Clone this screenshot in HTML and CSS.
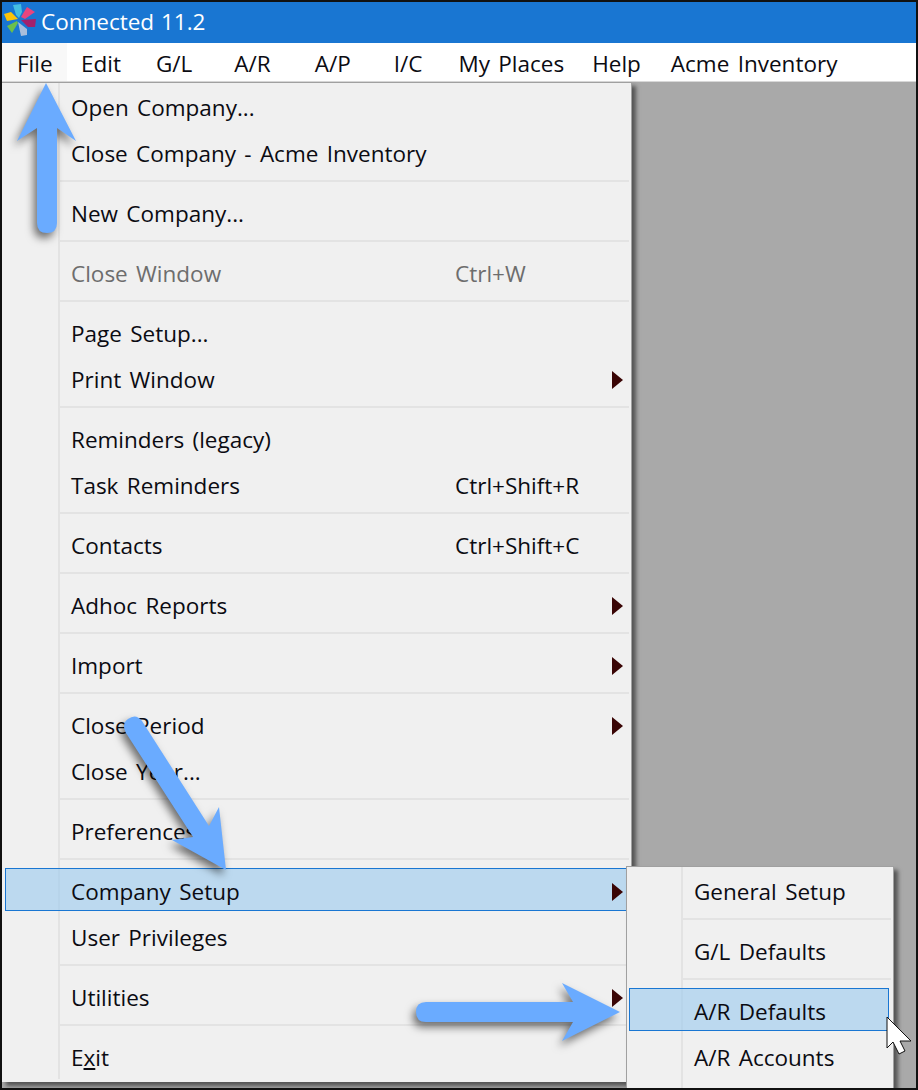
FILE: index.html
```html
<!DOCTYPE html>
<html lang="en">
<head>
<meta charset="utf-8">
<title>Connected 11.2</title>
<link rel="stylesheet" href="styles.css">
</head>
<body>
<div class="frame">
  <header class="titlebar">
    <svg class="logo" width="36" height="36" viewBox="2 3 36 36">
      <polygon points="13,5 21,4 22,12 19,18 16,15" fill="#45bde0"/>
      <polygon points="27,7 35,12 25,19 21,17" fill="#e8457e"/>
      <polygon points="36,19 35,27 28,27 21,20" fill="#a3216c"/>
      <polygon points="27,29 27,35 21,36 18,22" fill="#a9bedb"/>
      <polygon points="7,26 17,21 18,23 12,33" fill="#6cbf4b"/>
      <polygon points="4,14 11,12 18,19 7,21" fill="#fdc409"/>
    </svg>
    <span class="title">Connected 11.2</span>
  </header>
  <nav class="menubar">
    <span class="top top-file">File</span>
    <span class="top top-edit">Edit</span>
    <span class="top top-gl">G/L</span>
    <span class="top top-ar">A/R</span>
    <span class="top top-ap">A/P</span>
    <span class="top top-ic">I/C</span>
    <span class="top top-places">My Places</span>
    <span class="top top-help">Help</span>
    <span class="top top-acme">Acme Inventory</span>
  </nav>
  <main class="workspace">
    <div class="menu">
      <div class="row"><span>Open Company...</span></div>
      <div class="row"><span>Close Company - Acme Inventory</span></div>
      <div class="sep"></div>
      <div class="row"><span>New Company...</span></div>
      <div class="sep"></div>
      <div class="row disabled"><span>Close Window</span><span>Ctrl+W</span></div>
      <div class="sep"></div>
      <div class="row"><span>Page Setup...</span></div>
      <div class="row more"><span>Print Window</span></div>
      <div class="sep"></div>
      <div class="row"><span>Reminders (legacy)</span></div>
      <div class="row"><span>Task Reminders</span><span>Ctrl+Shift+R</span></div>
      <div class="sep"></div>
      <div class="row"><span>Contacts</span><span>Ctrl+Shift+C</span></div>
      <div class="sep"></div>
      <div class="row more"><span>Adhoc Reports</span></div>
      <div class="sep"></div>
      <div class="row more"><span>Import</span></div>
      <div class="sep"></div>
      <div class="row more"><span>Close Period</span></div>
      <div class="row"><span>Close Year...</span></div>
      <div class="sep"></div>
      <div class="row"><span>Preferences...</span></div>
      <div class="sep"></div>
      <div class="row more active"><span>Company Setup</span></div>
      <div class="row"><span>User Privileges</span></div>
      <div class="sep"></div>
      <div class="row more"><span>Utilities</span></div>
      <div class="sep"></div>
      <div class="row"><span>E<u>x</u>it</span></div>
    </div>
    <div class="submenu">
      <div class="row"><span>General Setup</span></div>
      <div class="sep"></div>
      <div class="row"><span>G/L Defaults</span></div>
      <div class="sep"></div>
      <div class="row active"><span>A/R Defaults</span></div>
      <div class="row"><span>A/R Accounts</span></div>
    </div>
  </main>
  <svg class="overlay" width="918" height="1090" viewBox="0 0 918 1090">
    <g class="arrow">
      <path d="M46 83 L76 141 L57 128 L57 223 Q57 233 47 233 Q37 233 37 223 L37 128 L17 141 Z"/>
      <path d="M226 870 L219 807 L209 826 L142 721 Q136 713 128 719 Q121 724 126 733 L193 837 L172 840 Z"/>
      <path d="M620 1012 L562 983 L573 1002 L426 1002 Q416 1002 416 1012 Q416 1022 426 1022 L573 1022 L562 1041 Z"/>
    </g>
    <path class="cursor" d="M887 1017 L887 1048 L893 1042 L899 1054 L905 1051 L900 1041 L911 1041 Z"/>
  </svg>
</div>
</body>
</html>
```
FILE: styles.css
```css
* { box-sizing: border-box; }
html, body { margin: 0; padding: 0; }
body { width: 918px; height: 1090px; overflow: hidden; background: #111; }
.frame {
  position: relative;
  width: 918px;
  height: 1090px;
  border: 2px solid #111;
  overflow: hidden;
  display: flex;
  flex-direction: column;
  font-family: "Open Sans", "Noto Sans", sans-serif;
  font-size: 22.5px;
  word-spacing: 2.5px;
  color: #0b0b12;
}
.titlebar {
  height: 41px;
  flex: none;
  background: #1976d2;
  color: #fff;
  display: flex;
  align-items: center;
  gap: 3px;
}
.logo { flex: none; margin-top: -4px; }
.title { display: block; margin-top: -3px; word-spacing: 1px; }
.menubar {
  height: 38px;
  flex: none;
  background: #fff;
  display: flex;
  align-items: center;
}
.top { display: block; line-height: 38px; height: 38px; padding-top: 2px; white-space: nowrap; }
.top-file { width: 65px; padding-left: 15px; background: #f8f8f8; }
.top-edit { margin-left: 14px; }
.top-gl { margin-left: 35px; }
.top-ar { margin-left: 42px; }
.top-ap { margin-left: 44px; }
.top-ic { margin-left: 43px; }
.top-places { margin-left: 36px; }
.top-help { margin-left: 28px; }
.top-acme { margin-left: 30px; }
.workspace {
  position: relative;
  flex: 1;
  background: #a9a9a9;
  border-top: 1px solid #d8d8d8;
}
.menu, .submenu {
  position: absolute;
  display: flex;
  flex-direction: column;
  background-color: #f0f0f0;
  background-image: linear-gradient(#e3e3e3, #e3e3e3);
  background-repeat: no-repeat;
}
.menu {
  z-index: 1;
  left: 0;
  top: 0;
  width: 630px;
  height: 1000px;
  padding: 2px 2px 0 0;
  border-top: 1px solid #a0a0a0;
  border-right: 1px solid #a0a0a0;
  background-size: 2px 996px;
  background-position: 56px 0;
  box-shadow: 4px 4px 4px #555;
}
.submenu {
  z-index: 2;
  left: 624px;
  top: 784px;
  width: 268px;
  height: 230px;
  padding: 2px 2px 0 1px;
  border: 1px solid #a0a0a0;
  background-size: 2px 230px;
  background-position: 54px 0;
  box-shadow: 4px 4px 4px #555;
}
.row {
  position: relative;
  height: 46px;
  flex: none;
  display: grid;
  grid-template-columns: 384px 1fr;
  align-items: center;
  padding-left: 69px;
  padding-bottom: 2px;
  white-space: nowrap;
  z-index: 1;
}
.submenu .row { padding-left: 66px; }
.disabled { color: #6d6d6d; }
.sep {
  height: 14px;
  flex: none;
  margin-left: 56px;
  padding-top: 3px;
}
.sep::before {
  content: "";
  display: block;
  height: 2px;
  background: #e3e3e3;
}
.submenu .sep { margin-left: 54px; }
.more::after {
  content: "";
  position: absolute;
  right: 6px;
  top: 14px;
  border-style: solid;
  border-width: 9px 0 9px 11px;
  border-color: transparent transparent transparent #3a0505;
}
.active::before {
  content: "";
  position: absolute;
  top: -1px;
  height: 41px;
  left: 3px;
  right: -10px;
  background: rgba(153, 201, 239, 0.6);
  border: 1px solid #1976d2;
  z-index: -1;
}
.submenu .active::before { left: 1px; right: 2px; }
.overlay {
  position: absolute;
  left: -2px;
  top: -2px;
  z-index: 5;
  pointer-events: none;
}
.arrow {
  fill: #6aabff;
  filter: drop-shadow(-3px 5px 4px rgba(0, 0, 0, 0.55));
}
.cursor { fill: #fff; stroke: #111; stroke-width: 1; stroke-linejoin: miter; }
```
